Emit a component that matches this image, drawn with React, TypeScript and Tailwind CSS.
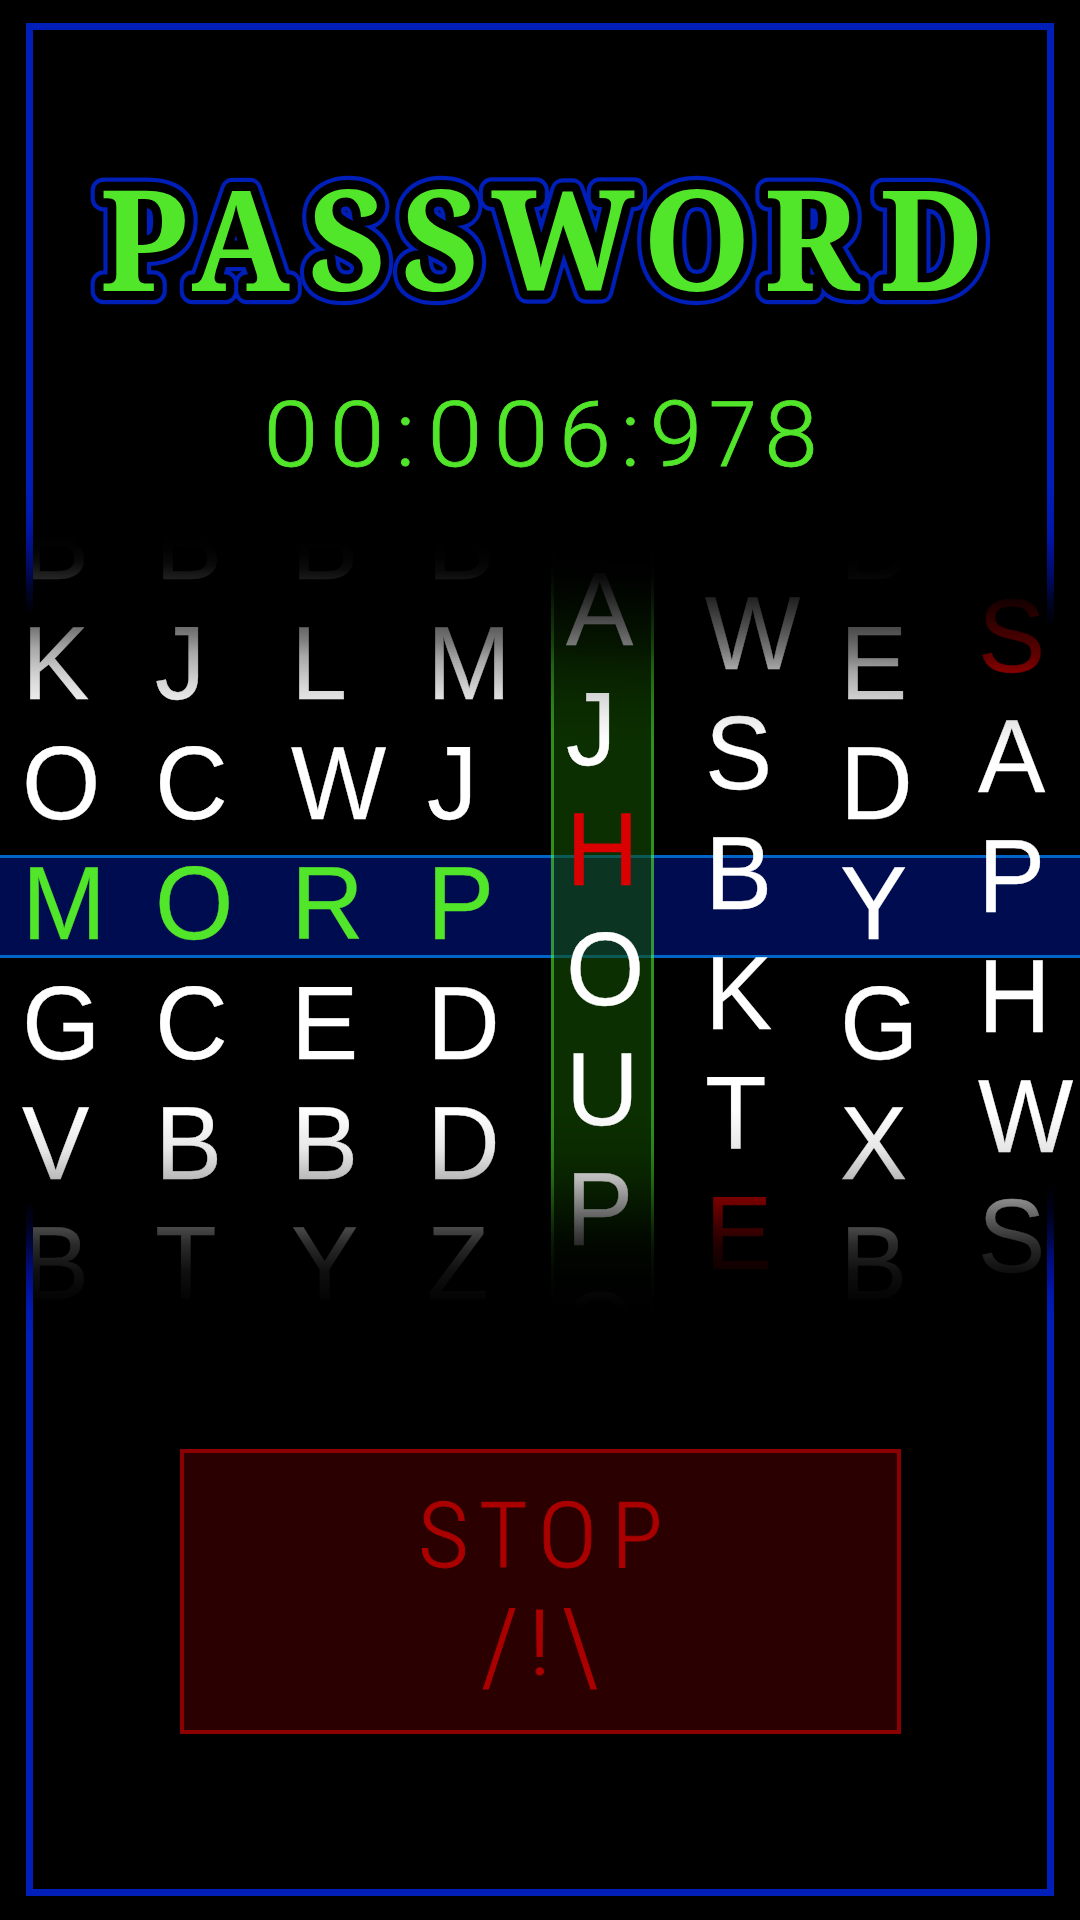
import React from "react";

type Reel = { letters: string; className: string; hit?: number; miss?: number };

const REELS: Reel[] = [
  { letters: "BKOMGVB", className: "w-[133px] pt-[3px]", hit: 3 },
  { letters: "BJCOCBT", className: "w-[136px] pt-[3px]", hit: 3 },
  { letters: "BLWREBY", className: "w-[136px] pt-[3px]", hit: 3 },
  { letters: "BMJPDDZ", className: "w-[139px] pt-[3px]", hit: 3 },
  { letters: "AJHOUPS", className: "w-[139px] pt-[69px]", miss: 2 },
  { letters: "WSBKTE", className: "w-[135px] pt-[93px]", miss: 5 },
  { letters: "BEDYGXB", className: "w-[138px] pt-[3px]" },
  { letters: "SAPHWS", className: "w-[103px] pt-[96px]", miss: 0 },
];

const TITLE = [
  { ch: "P", x: 99.7, s: 0.98 },
  { ch: "A", x: 191.5, s: 0.93 },
  { ch: "S", x: 308, s: 0.958 },
  { ch: "S", x: 401, s: 0.958 },
  { ch: "W", x: 491.5, s: 0.957 },
  { ch: "O", x: 642.4, s: 0.986 },
  { ch: "R", x: 764.2, s: 0.958 },
  { ch: "D", x: 879.2, s: 0.982 },
];

const TIMER = [
  { ch: "0", slot: "w-[66px]", glyph: "scale-x-[1.1]" },
  { ch: "0", slot: "w-[66.4px]", glyph: "scale-x-[1.1]" },
  { ch: ":", slot: "w-[30.6px]", glyph: "scale-x-[1.05]" },
  { ch: "0", slot: "w-[68.4px]", glyph: "scale-x-[1.1]" },
  { ch: "0", slot: "w-[63.6px]", glyph: "scale-x-[1.1]" },
  { ch: "6", slot: "w-[64.8px]", glyph: "scale-x-[1.04]" },
  { ch: ":", slot: "w-[25.8px]", glyph: "scale-x-[1.05]" },
  { ch: "9", slot: "w-[65.8px]", glyph: "scale-x-[1.05]" },
  { ch: "7", slot: "w-[47.6px]", glyph: "scale-x-[0.965]" },
  { ch: "8", slot: "w-[69.4px]", glyph: "scale-x-[1.07]" },
];

const STOP = [
  { ch: "S", slot: "w-[60px]", glyph: "scale-x-[1.1]" },
  { ch: "T", slot: "w-[59.2px]", glyph: "scale-x-[1.04]" },
  { ch: "O", slot: "w-[70px]", glyph: "scale-x-[1.13]" },
  { ch: "P", slot: "w-[69px]", glyph: "scale-x-[1.06]" },
];

const WARNING = [
  { ch: "/", slot: "w-[42px]", glyph: "scale-x-[1.18] scale-y-[1.15] translate-y-[3px]" },
  { ch: "!", slot: "w-[37.2px]", glyph: "scale-x-[1.15]" },
  { ch: "\\", slot: "w-[43px]", glyph: "scale-x-[1.18] scale-y-[1.15] translate-y-[3px]" },
];

function Glyphs({ items }: { items: { ch: string; slot: string; glyph: string }[] }) {
  return (
    <>
      {items.map((g, i) => (
        <span key={i} className={`flex shrink-0 justify-center ${g.slot}`}>
          <span className={`inline-block ${g.glyph}`}>{g.ch}</span>
        </span>
      ))}
    </>
  );
}

function Title() {
  const layer = (className: string) => (
    <g className={className}>
      {TITLE.map((t, i) => (
        <text key={i} transform={`translate(${t.x} 191.3) scale(${t.s} 1)`}>
          {t.ch}
        </text>
      ))}
    </g>
  );
  return (
    <h1 className="h-[260px] w-full">
      <svg
        viewBox="0 0 1080 260"
        className="block h-full w-full text-[140px] font-bold [font-family:'Noto_Serif','DejaVu_Serif',serif] [stroke-linejoin:round]"
      >
        {layer("fill-[#001eb8] stroke-[#001eb8] [stroke-width:26.5px]")}
        {layer("fill-black stroke-black [stroke-width:18px]")}
        {layer("fill-[#52e62b]")}
      </svg>
    </h1>
  );
}

function Frame() {
  return (
    <div className="pointer-events-none absolute inset-x-[26px] top-[23px] bottom-[24px] flex flex-col justify-between">
      <div className="flex flex-col">
        <div className="h-[7px] bg-[#001eb8]" />
        <div className="flex items-start justify-between">
          <div className="h-[586px] w-[7px] bg-[linear-gradient(180deg,#001eb8_450px,#001ab0_480px,#0014a0_502px,#000e78_525px,#000850_545px,#000424_562px,#000_586px)]" />
          <div className="h-[597px] w-[7px] bg-[linear-gradient(180deg,#001eb8_455px,#001ab0_488px,#0014a0_512px,#000e78_535px,#000850_555px,#000424_572px,#000_597px)]" />
        </div>
      </div>
      <div className="flex flex-col">
        <div className="flex items-end justify-between">
          <div className="h-[690px] w-[7px] bg-[linear-gradient(0deg,#001eb8_555px,#001ab0_580px,#00129a_600px,#000c78_622px,#000640_645px,#000220_663px,#000_690px)]" />
          <div className="h-[705px] w-[7px] bg-[linear-gradient(0deg,#001eb8_565px,#001ab0_590px,#00129a_610px,#000c78_632px,#000640_655px,#000220_673px,#000_705px)]" />
        </div>
        <div className="h-[7px] bg-[#001eb8]" />
      </div>
    </div>
  );
}

function Reels() {
  return (
    <section className="relative h-[920px] overflow-hidden [mask-composite:intersect] [mask-image:linear-gradient(181.7deg,transparent_84px,rgb(0_0_0/.01)_98px,rgb(0_0_0/.04)_111px,rgb(0_0_0/.14)_129px,rgb(0_0_0/.35)_163px,rgb(0_0_0/.48)_181px,rgb(0_0_0/.66)_199px,rgb(0_0_0/.84)_229px,rgb(0_0_0/.93)_251px,black_276px),linear-gradient(180deg,black_630px,rgb(0_0_0/.9)_670px,rgb(0_0_0/.73)_699px,rgb(0_0_0/.54)_720px,rgb(0_0_0/.29)_747px,rgb(0_0_0/.16)_765px,rgb(0_0_0/.06)_792px,rgb(0_0_0/.02)_815px,transparent_830px)]">
      <div className="absolute inset-x-0 top-[375px] h-[103px] border-y-[3px] border-[#0064c8] bg-[#000c50]" />
      <div className="absolute inset-y-0 left-[551px] w-[103px] border-x-[3px] border-[#54ff2c] bg-[#155400] bg-clip-padding opacity-[.57]" />
      <div className="relative flex pl-[21.5px] text-[104px] leading-[120px] text-white [font-family:'Liberation_Sans',Arial,sans-serif]">
        {REELS.map((reel, c) => (
          <div key={c} className={`flex shrink-0 flex-col items-start ${reel.className}`}>
            {[...reel.letters].map((ch, r) => (
              <span
                key={r}
                className={`h-[120px] origin-left scale-x-[0.97] [-webkit-text-stroke:0.3px_currentColor] ${
                  r === reel.hit ? "text-[#52e62b]" : r === reel.miss ? "text-[#d80000]" : ""
                }`}
              >
                {ch}
              </span>
            ))}
          </div>
        ))}
      </div>
    </section>
  );
}

export default function App() {
  return (
    <main className="relative flex h-[1920px] w-[1080px] flex-col overflow-hidden bg-black">
      <header className="flex h-[480px] shrink-0 flex-col pt-[100px]">
        <Title />
        <div className="mt-[30.5px] flex pl-[257.5px] text-[90px] leading-[90px] font-light text-[#52e62b] [-webkit-text-stroke:0.8px_#52e62b] [font-family:Roboto,sans-serif]">
          <Glyphs items={TIMER} />
        </div>
      </header>
      <Reels />
      <button className="mt-[49px] ml-[180px] flex h-[285px] w-[721px] flex-col items-center border-4 border-[#8b0000] bg-[#2a0000] pt-[30px] text-[90px] leading-[108px] font-light text-[#aa0000] [-webkit-text-stroke:0.8px_#aa0000] [font-family:'Roboto_Condensed',Roboto,sans-serif]">
        <span className="ml-1 flex">
          <Glyphs items={STOP} />
        </span>
        <span className="flex">
          <Glyphs items={WARNING} />
        </span>
      </button>
      <Frame />
    </main>
  );
}
